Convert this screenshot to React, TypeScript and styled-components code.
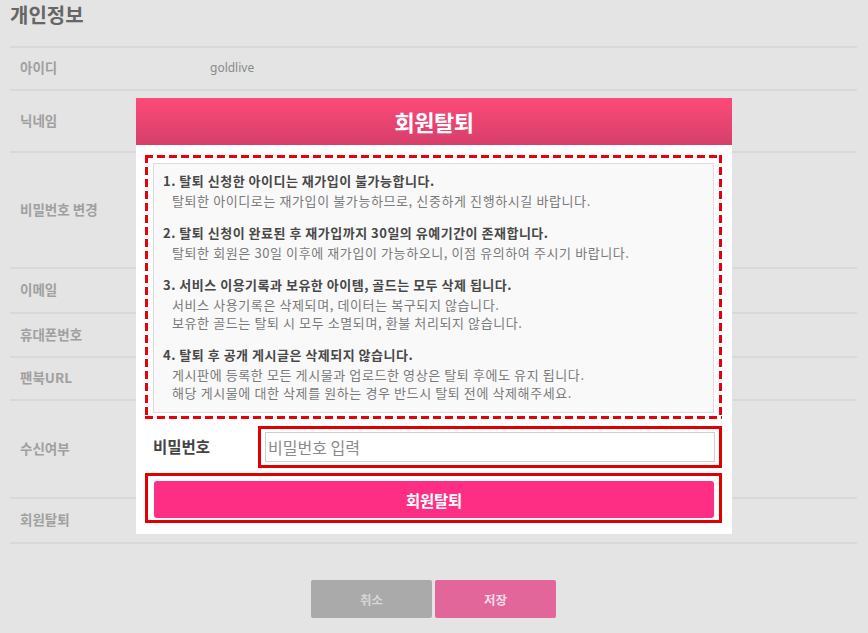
import React from "react";
import styled, { createGlobalStyle } from "styled-components";

const Global = createGlobalStyle`
  html, body { margin: 0; padding: 0; }
  body {
    background: #e4e4e4;
    font-family: "Noto Sans CJK KR", "Noto Sans", sans-serif;
    width: 868px;
    height: 633px;
    overflow: hidden;
  }
  * { box-sizing: border-box; }
`;

const Page = styled.div`
  position: relative;
  width: 868px;
  height: 633px;
  padding: 0 11px 0 10px;
`;

const PageTitle = styled.h1`
  margin: 0;
  height: 46px;
  padding-top: 1px;
  font-size: 20px;
  line-height: 28px;
  font-weight: 700;
  color: #666;
  letter-spacing: 0;
`;

const Table = styled.div`
  border-top: 2px solid #d9d9d9;
`;

const Row = styled.div<{ $h: number }>`
  display: flex;
  align-items: center;
  height: ${(p) => p.$h}px;
  border-bottom: 2px solid #d9d9d9;
`;

const Label = styled.div`
  width: 200px;
  padding-left: 10px;
  padding-bottom: 3px;
  font-size: 13.5px;
  font-weight: 700;
  color: #a0a0a0;
`;

const Value = styled.div`
  padding-bottom: 2px;
  font-size: 12px;
  color: #8a8a8a;
  font-family: "Noto Sans", sans-serif;
`;

const ButtonRow = styled.div`
  display: flex;
  justify-content: center;
  gap: 3px;
  margin-top: 36px;
`;

const PageButton = styled.button<{ $primary?: boolean }>`
  width: 121px;
  height: 38px;
  border: none;
  border-radius: 2px;
  background: ${(p) => (p.$primary ? "#e2669a" : "#aaaaaa")};
  color: ${(p) => (p.$primary ? "#f7dbe7" : "#d6d6d6")};
  font-family: inherit;
  font-size: 12.5px;
  font-weight: 700;
`;

const Modal = styled.div`
  position: absolute;
  left: 136px;
  top: 98px;
  width: 596px;
  height: 436px;
  background: #fff;
  display: flex;
  flex-direction: column;
`;

const ModalHeader = styled.div`
  height: 47px;
  padding-bottom: 2px;
  background: linear-gradient(#fd4a78, #d63f6b);
  display: flex;
  align-items: center;
  justify-content: center;
  color: #fff;
  font-size: 22px;
  font-weight: 700;
  letter-spacing: -0.5px;
`;

const ModalBody = styled.div`
  padding: 10px 10px 0 9px;
  display: flex;
  flex-direction: column;
`;

const DashedFrame = styled.div`
  height: 264px;
  padding: 8px 8px 6px 8px;
  background:
    repeating-linear-gradient(90deg, #e8000b 0 8px, transparent 8px 12px) top left / 100% 3px no-repeat,
    repeating-linear-gradient(90deg, #e8000b 0 8px, transparent 8px 12px) bottom left / 100% 3px no-repeat,
    repeating-linear-gradient(180deg, #e8000b 0 8px, transparent 8px 12px) top left / 3px 100% no-repeat,
    repeating-linear-gradient(180deg, #e8000b 0 8px, transparent 8px 12px) top right / 3px 100% no-repeat;
`;

const NoticeBox = styled.div`
  height: 100%;
  background: #f9f9f9;
  border: 1px solid #dcdcdc;
  padding: 7px 10px 0 9px;
  display: flex;
  flex-direction: column;
  gap: 13px;
`;

const Item = styled.div`
  display: flex;
  flex-direction: column;
  gap: 1px;
`;

const ItemTitle = styled.div`
  font-size: 13px;
  line-height: 20px;
  font-weight: 700;
  color: #484848;
  letter-spacing: 0.5px;
`;

const ItemText = styled.div`
  padding-left: 9px;
  font-size: 13px;
  line-height: 18px;
  color: #7a7a7a;
  letter-spacing: 0.6px;
`;

const PasswordRow = styled.div`
  display: flex;
  align-items: center;
  margin-top: 7px;
`;

const PasswordLabel = styled.div`
  width: 113px;
  padding-left: 8px;
  padding-bottom: 2px;
  font-size: 15.5px;
  font-weight: 700;
  color: #444;
`;

const RedBox = styled.div`
  flex: 1;
  border: 3px solid #e00000;
  padding: 3px 4px 3px 4px;
`;

const PasswordInput = styled.input`
  display: block;
  width: 100%;
  height: 30px;
  border: 1px solid #cfcfcf;
  padding: 0 2px;
  font-family: inherit;
  font-size: 16px;
  color: #333;
  outline: none;
  &::placeholder { color: #8a8a8a; }
`;

const SubmitFrame = styled.div`
  margin-top: 5px;
  height: 50px;
  border: 3px solid #e00000;
  padding: 5px 5px 2px 6px;
`;

const SubmitButton = styled.button`
  display: block;
  width: 100%;
  height: 37px;
  border: none;
  border-radius: 3px;
  background: #ff2e85;
  color: #fff;
  font-family: inherit;
  font-size: 15.5px;
  font-weight: 700;
  letter-spacing: -0.3px;
`;

const rows: { label: string; value?: string; h: number }[] = [
  { label: "아이디", value: "goldlive", h: 43 },
  { label: "닉네임", h: 62 },
  { label: "비밀번호 변경", h: 116 },
  { label: "이메일", h: 45 },
  { label: "휴대폰번호", h: 44 },
  { label: "팬북URL", h: 43 },
  { label: "수신여부", h: 98 },
  { label: "회원탈퇴", h: 45 },
];

const notices: { title: string; lines: string[] }[] = [
  {
    title: "1. 탈퇴 신청한 아이디는 재가입이 불가능합니다.",
    lines: ["탈퇴한 아이디로는 재가입이 불가능하므로, 신중하게 진행하시길 바랍니다."],
  },
  {
    title: "2. 탈퇴 신청이 완료된 후 재가입까지 30일의 유예기간이 존재합니다.",
    lines: ["탈퇴한 회원은 30일 이후에 재가입이 가능하오니, 이점 유의하여 주시기 바랍니다."],
  },
  {
    title: "3. 서비스 이용기록과 보유한 아이템, 골드는 모두 삭제 됩니다.",
    lines: [
      "서비스 사용기록은 삭제되며, 데이터는 복구되지 않습니다.",
      "보유한 골드는 탈퇴 시 모두 소멸되며, 환불 처리되지 않습니다.",
    ],
  },
  {
    title: "4. 탈퇴 후 공개 게시글은 삭제되지 않습니다.",
    lines: [
      "게시판에 등록한 모든 게시물과 업로드한 영상은 탈퇴 후에도 유지 됩니다.",
      "해당 게시물에 대한 삭제를 원하는 경우 반드시 탈퇴 전에 삭제해주세요.",
    ],
  },
];

export default function App() {
  return (
    <>
      <Global />
      <Page>
        <PageTitle>개인정보</PageTitle>
        <Table>
          {rows.map((r) => (
            <Row key={r.label} $h={r.h}>
              <Label>{r.label}</Label>
              {r.value && <Value>{r.value}</Value>}
            </Row>
          ))}
        </Table>
        <ButtonRow>
          <PageButton>취소</PageButton>
          <PageButton $primary>저장</PageButton>
        </ButtonRow>

        <Modal>
          <ModalHeader>회원탈퇴</ModalHeader>
          <ModalBody>
            <DashedFrame>
              <NoticeBox>
                {notices.map((n) => (
                  <Item key={n.title}>
                    <ItemTitle>{n.title}</ItemTitle>
                    <ItemText>
                      {n.lines.map((l) => (
                        <div key={l}>{l}</div>
                      ))}
                    </ItemText>
                  </Item>
                ))}
              </NoticeBox>
            </DashedFrame>
            <PasswordRow>
              <PasswordLabel>비밀번호</PasswordLabel>
              <RedBox>
                <PasswordInput type="password" placeholder="비밀번호 입력" />
              </RedBox>
            </PasswordRow>
            <SubmitFrame>
              <SubmitButton>회원탈퇴</SubmitButton>
            </SubmitFrame>
          </ModalBody>
        </Modal>
      </Page>
    </>
  );
}
